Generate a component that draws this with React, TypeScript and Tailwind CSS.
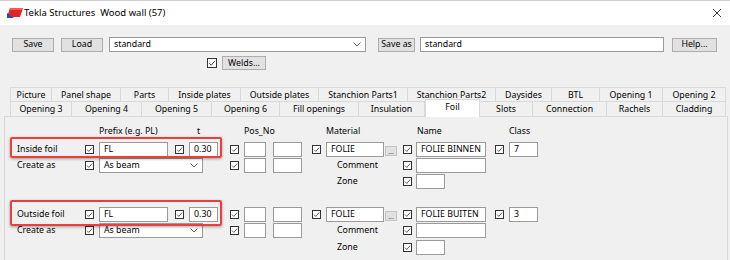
import React from "react";

const Check = ({ big = false }: { big?: boolean }) => (
  <div
    className={`${big ? "w-[10px] h-[10px]" : "w-[9px] h-[9px]"} border border-[#333] bg-white flex items-center justify-center shrink-0`}
  >
    <svg viewBox="0 0 8 8" className="w-full h-full">
      <path d="M1.2 4.2 L3.2 6.2 L7 1.8" fill="none" stroke="#333" strokeWidth="0.9" />
    </svg>
  </div>
);

const Input = ({ w, text = "" }: { w: string; text?: string }) => (
  <div className={`${w} h-[15px] border border-[#9a9a9a] bg-white flex items-center pl-[4px] text-black`}>
    {text}
  </div>
);

const Btn = ({ w, text }: { w: string; text: string }) => (
  <div className={`${w} h-[14px] border border-[#adadad] bg-[#e1e1e1] flex items-center justify-center text-black`}>
    {text}
  </div>
);

const Chevron = () => (
  <svg width="8" height="5" viewBox="0 0 8 5">
    <path d="M0.5 0.5 L4 4 L7.5 0.5" fill="none" stroke="#555" strokeWidth="0.9" />
  </svg>
);

const row1 = [
  ["Picture", "w-[42px]"],
  ["Panel shape", "w-[69px]"],
  ["Parts", "w-[48px]"],
  ["Inside plates", "w-[72px]"],
  ["Outside plates", "w-[78px]"],
  ["Stanchion Parts1", "w-[89px]"],
  ["Stanchion Parts2", "w-[88px]"],
  ["Daysides", "w-[56px]"],
  ["BTL", "w-[48px]"],
  ["Opening 1", "w-[63px]"],
  ["Opening 2", "w-[63px]"],
];
const row2 = [
  ["Opening 3", "w-[62px]"],
  ["Opening 4", "w-[70px]"],
  ["Opening 5", "w-[70px]"],
  ["Opening 6", "w-[68px]"],
  ["Fill openings", "w-[79px]"],
  ["Insulation", "w-[66px]"],
  ["Foil", "w-[55px]"],
  ["Slots", "w-[53px]"],
  ["Connection", "w-[74px]"],
  ["Rachels", "w-[56px]"],
  ["Cladding", "w-[63px]"],
];

const grid =
  "grid grid-cols-[75px_14px_76px_14px_41px_14px_29px_39px_14px_77px_13px_79px_14px_40px] items-center";

const Group = ({
  label,
  name,
  cls,
  header,
  boxTop,
  boxH,
  rowH,
}: {
  label: string;
  name: string;
  cls: string;
  header: boolean;
  boxTop: string;
  boxH: string;
  rowH: string;
}) => (
  <div className="relative">
    {header && (
      <div className={`${grid} h-[16px]`}>
        <div />
        <div />
        <div>Prefix (e.g. PL)</div>
        <div />
        <div className="pl-[8px]">t</div>
        <div />
        <div className="col-span-2">Pos_No</div>
        <div />
        <div>Material</div>
        <div />
        <div className="pl-[1px]">Name</div>
        <div />
        <div>Class</div>
      </div>
    )}
    <div className={header ? "mt-[2px]" : ""}>
      <div className={`${grid} ${rowH}`}>
        <div className="pl-[7px]">{label}</div>
        <Check />
        <Input w="w-[69px]" text="FL" />
        <Check />
        <Input w="w-[29px]" text="0.30" />
        <Check />
        <Input w="w-[22px]" />
        <Input w="w-[29px]" />
        <Check />
        <div className="flex items-center">
          <Input w="w-[58px]" text="FOLIE" />
          <div className="ml-[1px] w-[12px] h-[10px] mt-[3px] border border-[#c4c4c4] bg-[#e1e1e1] flex items-end justify-center text-[7px] leading-[7px] text-[#555]">
            ...
          </div>
        </div>
        <Check />
        <Input w="w-[70px]" text={name} />
        <Check />
        <Input w="w-[29px]" text={cls} />
      </div>
      <div className={`${grid} ${rowH}`}>
        <div className="pl-[7px]">Create as</div>
        <Check />
        <div className="col-span-3 w-[104px] h-[15px] border border-[#9a9a9a] bg-white flex items-center justify-between pl-[4px] pr-[4px]">
          <span>As beam</span>
          <Chevron />
        </div>
        <Check />
        <Input w="w-[22px]" />
        <Input w="w-[29px]" />
        <div className="col-span-2 pl-[25px]">Comment</div>
        <Check />
        <Input w="w-[70px]" />
        <div />
        <div />
      </div>
      <div className={`${grid} ${rowH}`}>
        <div />
        <div />
        <div />
        <div />
        <div />
        <div />
        <div />
        <div />
        <div className="col-span-2 pl-[25px]">Zone</div>
        <Check />
        <Input w="w-[29px]" />
        <div />
        <div />
      </div>
    </div>
    <div
      className={`absolute left-0 w-[212px] ${boxTop} ${boxH} border-2 border-[#e8403c] rounded-[2px] shadow-[0_1px_3px_rgba(0,0,0,0.35)] pointer-events-none`}
    />
  </div>
);

export default function App() {
  return (
    <div className="w-[730px] h-[260px] overflow-hidden bg-[#f0f0f0] font-['Noto_Sans',sans-serif] text-[8.8px] leading-none text-black">
      {/* Title bar */}
      <div className="h-[25px] bg-white border-t border-[#cfcfcf] flex items-center">
        <svg width="16" height="10" viewBox="0 0 16 10" className="ml-[7px]">
          <polygon points="3,0 16,0 13,9 0,9" fill="#e0262b" />
          <polygon points="0,5 0,10 7,10" fill="#1d4fb8" />
          <polygon points="3,0 16,0 15,2 2.3,2" fill="#ff5a5a" />
        </svg>
        <span className="ml-[1px] text-[9.5px] text-black">Tekla Structures&nbsp;&nbsp;Wood wall (57)</span>
        <div className="flex-1" />
        <svg width="10" height="10" viewBox="0 0 10 10" className="mr-[8px]">
          <path d="M1 1 L9 9 M9 1 L1 9" stroke="#222" strokeWidth="0.9" />
        </svg>
      </div>

      {/* Toolbar rows */}
      <div className="pt-[12px] pl-[12px] flex items-center">
        <Btn w="w-[42px]" text="Save" />
        <div className="ml-[7px]">
          <Btn w="w-[42px]" text="Load" />
        </div>
        <div className="ml-[6px] w-[257px] h-[15px] border border-[#9a9a9a] bg-white flex items-center justify-between pl-[4px] pr-[4px]">
          <span>standard</span>
          <Chevron />
        </div>
        <div className="ml-[12px]">
          <Btn w="w-[37px]" text="Save as" />
        </div>
        <div className="ml-[5px]">
          <Input w="w-[244px]" text="standard" />
        </div>
        <div className="ml-[8px]">
          <Btn w="w-[45px]" text="Help..." />
        </div>
      </div>
      <div className="mt-[4px] pl-[207px] flex items-center">
        <Check big />
        <div className="ml-[5px]">
          <Btn w="w-[44px]" text="Welds..." />
        </div>
      </div>

      {/* Tab control */}
      <div className="mt-[17px] ml-[4px] w-[724px]">
        <div className="pl-[6px] flex h-[14px]">
          {row1.map(([t, w], i) => (
            <div
              key={t}
              className={`${w} h-[14px] border-t border-r ${i === 0 ? "border-l" : ""} border-[#d9d9d9] bg-[#f0f0f0] flex items-center justify-center pt-[1px]`}
            >
              {t}
            </div>
          ))}
        </div>
        <div className="pl-[6px] flex items-end h-[15px]">
          {row2.map(([t, w], i) =>
            t === "Foil" ? (
              <div
                key={t}
                className={`${w} h-[18px] -mb-px relative z-10 border-t border-r border-l border-[#d9d9d9] bg-white flex items-center justify-center pb-[2px]`}
              >
                {t}
              </div>
            ) : (
              <div
                key={t}
                className={`${w} h-[15px] border-t border-r ${i === 0 ? "border-l" : ""} border-[#d9d9d9] bg-[#f0f0f0] flex items-center justify-center`}
              >
                {t}
              </div>
            )
          )}
        </div>
        <div className="h-[160px] border border-[#d9d9d9] bg-[#f0f0f0] pl-[5px] pt-[6px]">
          <Group
            label="Inside foil"
            name="FOLIE BINNEN"
            cls="7"
            header
            boxTop="top-[14px]"
            boxH="h-[21px]"
            rowH="h-[16px]"
          />
          <div className="mt-[17px]">
            <Group
              label="Outside foil"
              name="FOLIE BUITEN"
              cls="3"
              header={false}
              boxTop="-top-[6px]"
              boxH="h-[26px]"
              rowH="h-[16.5px]"
            />
          </div>
        </div>
      </div>
    </div>
  );
}
